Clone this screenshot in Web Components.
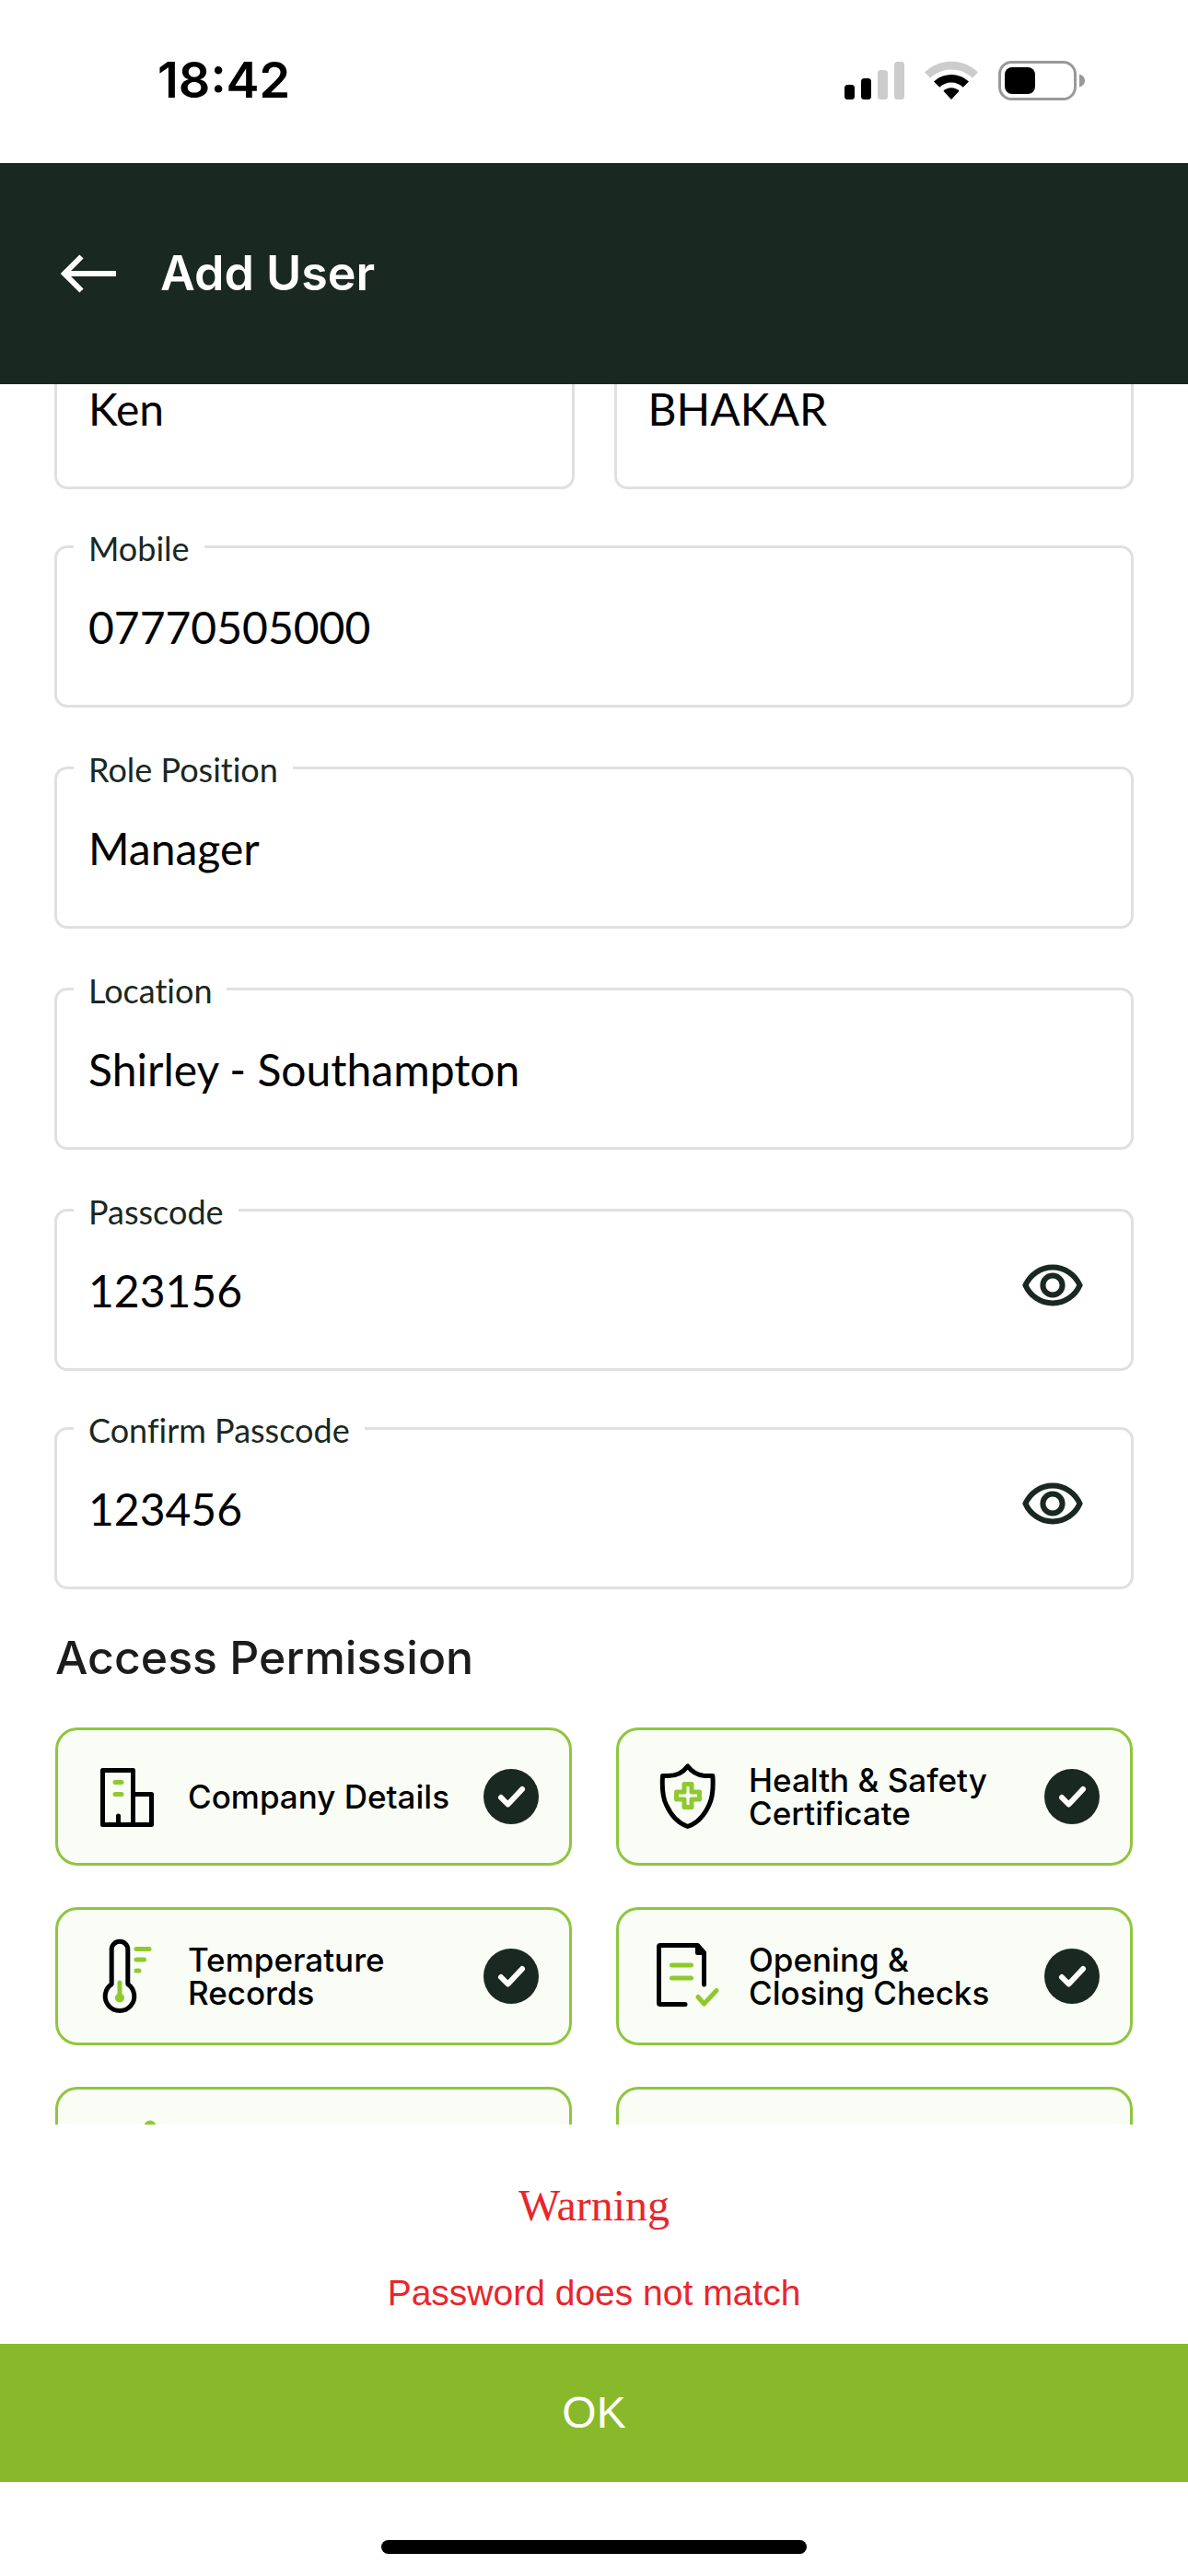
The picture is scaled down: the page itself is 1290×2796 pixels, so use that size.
<!DOCTYPE html>
<html lang="en">
<head>
<meta charset="utf-8">
<meta name="viewport" content="width=device-width, initial-scale=1">
<title>Add User</title>
<style>
  html, body { margin: 0; height: 100%; }
  body { background: #fff; color: #000; font-family: Lato, sans-serif; }
</style>
</head>
<body>
<app-screen>
  <status-bar slot="top"></status-bar>
  <app-header slot="top">Add User</app-header>

  <form-stack>
    <form-row>
      <text-field label="First Name" value="Ken"></text-field>
      <text-field label="Last Name" value="BHAKAR"></text-field>
    </form-row>
    <form-stack class="details">
      <text-field label="Mobile" value="07770505000"></text-field>
      <text-field label="Role Position" value="Manager"></text-field>
      <text-field label="Location" value="Shirley - Southampton"></text-field>
      <text-field label="Passcode" value="123156" reveal></text-field>
    </form-stack>
    <text-field label="Confirm Passcode" value="123456" reveal></text-field>
  </form-stack>

  <permission-list heading="Access Permission">
    <permission-card icon="building">Company Details</permission-card>
    <permission-card icon="shield">Health &amp; Safety Certificate</permission-card>
    <permission-card icon="thermometer">Temperature Records</permission-card>
    <permission-card icon="checklist">Opening &amp; Closing Checks</permission-card>
    <permission-card icon="dot"></permission-card>
    <permission-card></permission-card>
  </permission-list>

  <warning-sheet slot="bottom">
    <span slot="title">Warning</span>
    Password does not match
    <span slot="action">OK</span>
  </warning-sheet>
  <home-indicator slot="bottom"></home-indicator>
</app-screen>

<script>
  class Base extends HTMLElement {
    constructor() {
      super();
      this.attachShadow({ mode: 'open' });
    }
    connectedCallback() {
      this.shadowRoot.innerHTML = this.render();
    }
  }

  customElements.define('app-screen', class extends Base {
    render() {
      return `
        <style>
          :host { display: flex; flex-direction: column; height: 100vh; overflow: hidden; }
          main { flex: 1; min-height: 0; overflow: hidden; padding: 0 59px; }
          .scrolled { margin-top: -84px; }
        </style>
        <slot name="top"></slot>
        <main><div class="scrolled"><slot></slot></div></main>
        <slot name="bottom"></slot>`;
    }
  });

  customElements.define('status-bar', class extends Base {
    render() {
      return `
        <style>
          :host {
            display: flex; justify-content: space-between; align-items: center;
            box-sizing: border-box; height: 177px; padding: 0 111px 3px 171px;
            font: 600 54px/64px Inter, sans-serif;
          }
          .icons { display: flex; align-items: center; gap: 22px; }
          svg { display: block; }
        </style>
        <span>18:42</span>
        <div class="icons">
          <svg width="65" height="43" viewBox="0 0 65 43">
            <rect x="0" y="26" width="11" height="16" rx="3.5"/>
            <rect x="18" y="19" width="11" height="23" rx="3.5"/>
            <rect x="36" y="10" width="11" height="32" rx="3.5" fill="#ccc"/>
            <rect x="54" y="1" width="11" height="41" rx="3.5" fill="#ccc"/>
          </svg>
          <svg width="58" height="43" viewBox="0 0 58 43">
            <path d="M29 .8C18 .8 7.600 5 0 12.400L6.200 18.600C12.200 12.800 20.200 9.500 29 9.500S45.800 12.800 51.800 18.600L58 12.400C50.400 5 40 .8 29 .8Z" fill="#ccc"/>
            <path d="M29 15C21.800 15 15 17.800 10 22.600L16.200 28.700C19.600 25.500 24.200 23.500 29 23.500S38.400 25.500 41.800 28.700L48 22.600C43 17.800 36.200 15 29 15Z"/>
            <path d="M29 29.200C25.700 29.200 22.700 30.400 20.400 32.700L29 42L37.600 32.700C35.300 30.400 32.300 29.200 29 29.200Z"/>
          </svg>
          <svg width="95" height="43" viewBox="0 0 95 43">
            <rect x="1.500" y="1.500" width="82" height="40" rx="13" fill="none" stroke="#999" stroke-width="3"/>
            <rect x="7" y="7" width="33" height="29" rx="8"/>
            <path d="M88 14.500C91.500 15.500 94 18 94 21.500S91.500 27.500 88 28.500Z" fill="#999"/>
          </svg>
        </div>`;
    }
  });

  customElements.define('app-header', class extends Base {
    render() {
      return `
        <style>
          :host {
            display: flex; align-items: center; gap: 47px; box-sizing: border-box;
            height: 240px; padding: 0 65px; background: #1a2822; color: #fff;
          }
          button { padding: 0; border: 0; background: none; color: inherit; }
          svg { display: block; }
          h1 { margin: 0; font: 600 52px/60px Inter, sans-serif; }
        </style>
        <button type="button" aria-label="Back">
          <svg width="62" height="42" viewBox="0 0 62 42" fill="none" stroke="currentColor" stroke-width="6">
            <path d="M61 21H5M23.500 2.500L5 21L23.500 39.500"/>
          </svg>
        </button>
        <h1><slot></slot></h1>`;
    }
  });

  customElements.define('form-stack', class extends Base {
    render() {
      return `
        <style>
          :host { display: flex; flex-direction: column; gap: 39px; }
          :host(.details) { gap: 42px; }
        </style>
        <slot></slot>`;
    }
  });

  customElements.define('form-row', class extends Base {
    render() {
      return `
        <style>
          :host { display: flex; gap: 43px; }
          ::slotted(*) { flex: 1; min-width: 0; }
        </style>
        <slot></slot>`;
    }
  });

  customElements.define('text-field', class extends Base {
    render() {
      const eye = `
        <button type="button" aria-label="Show passcode">
          <svg width="72" height="72" viewBox="0 0 72 72" fill="none" stroke="currentColor" stroke-width="6">
            <path d="M36 16.500C49 16.500 60.500 24.500 65.500 36C60.500 47.500 49 55.500 36 55.500S11.500 47.500 6.500 36C11.500 24.500 23 16.500 36 16.500Z"/>
            <circle cx="36" cy="36" r="10.600"/>
          </svg>
        </button>`;
      return `
        <style>
          :host { display: block; }
          fieldset {
            min-width: 0; margin: 0; padding: 0 18px 21px;
            border: 3px solid #e0e0e0; border-radius: 14px;
          }
          legend {
            padding: 4px 16px 0; color: #1a2822; font-size: 36px; line-height: 43px;
            font-variant-ligatures: none;
          }
          label { display: block; }
          .line { display: flex; align-items: center; padding: 0 16px; }
          input {
            flex: 1; min-width: 0; height: 127px; padding: 0; border: 0; outline: 0;
            background: none; color: #000; font: 48px/58px Lato, sans-serif;
          }
          button { padding: 0 15px 12px 0; border: 0; background: none; color: #1a2822; }
          svg { display: block; }
        </style>
        <fieldset>
          <legend><label for="field">${this.getAttribute('label')}</label></legend>
          <div class="line">
            <input id="field" type="text" value="${this.getAttribute('value')}">
            ${this.hasAttribute('reveal') ? eye : ''}
          </div>
        </fieldset>`;
    }
  });

  customElements.define('permission-list', class extends Base {
    render() {
      return `
        <style>
          :host { display: block; padding: 0 1px; }
          h2 { margin: 44px 0 46px; color: #1c1c1c; font: 500 50px/60px Inter, sans-serif; }
          .grid { display: grid; grid-template-columns: 1fr 1fr; gap: 45px 48px; }
        </style>
        <h2>${this.getAttribute('heading')}</h2>
        <div class="grid"><slot></slot></div>`;
    }
  });

  const ICONS = {
    building: `
      <path d="M13.500 16.500H46.500V75.500H13.500ZM46.500 42.500H66.500V75.500H46.500M30.500 66V75"/>
      <path class="green" d="M27 29.500H34M27 42.500H34"/>`,
    shield: `
      <path d="M39.700 12C35 18.500 27.500 22.500 18.500 22.600H12.500C11.800 34 12 45 16.500 54C21.500 65 29.500 74 39.700 77.500C50 74 58 65 63 54C67.500 45 67.600 34 66.900 22.600H61C52 22.500 44.500 18.500 39.700 12Z"/>
      <path class="green" d="M36 31.500H44V40H52.500V48H44V56.500H36V48H27.500V40H36Z"/>`,
    thermometer: `
      <path d="M23.200 53.600V16A8.800 8.800 0 0 1 40.800 16V53.600A15.800 15.800 0 1 1 23.200 53.600Z"/>
      <path class="green" d="M32 52V66M50 15.500H64M50 27H58.500M50 39H53"/>
      <circle cx="32" cy="68.500" r="5" fill="#8fc92f" stroke="none"/>`,
    checklist: `
      <path d="M57.500 54V19.500L50.500 11.500H10Q8.500 11.500 8.500 13V74Q8.500 75.500 10 75.500H37M50.500 12V19.500H57" />
      <path d="M50 12V20H58Z" fill="#000" stroke="none"/>
      <path class="green" d="M22.500 33H43.500M22.500 47H43.500M51 67.500L57.500 75L71 60.500"/>`,
    dot: `<circle cx="65" cy="13" r="6.500" fill="#8fc92f" stroke="none"/>`
  };

  customElements.define('permission-card', class extends Base {
    render() {
      return `
        <style>
          :host { display: block; }
          label {
            display: flex; align-items: center; gap: 26px; box-sizing: border-box;
            height: 150px; padding: 0 33px 0 35px;
            border: 3px solid #8fc63f; border-radius: 24px; background: #f9fdf5;
            font: 500 35px/36px Inter, sans-serif;
          }
          .text { flex: 1; min-width: 0; }
          .icon {
            flex: none; fill: none; stroke: #000; stroke-width: 5;
            stroke-linecap: round; stroke-linejoin: round;
          }
          .green { stroke: #8fc92f; }
          .tick { display: grid; flex: none; }
          .tick > * { grid-area: 1 / 1; width: 60px; height: 60px; margin: 0; }
          input { appearance: none; border-radius: 50%; background: #1a2822; }
          .tick svg {
            pointer-events: none; fill: none; stroke: #fff; stroke-width: 6;
            stroke-linecap: round; stroke-linejoin: round;
          }
        </style>
        <label>
          <svg class="icon" width="80" height="90" viewBox="0 0 80 90">${ICONS[this.getAttribute('icon')] || ''}</svg>
          <span class="text"><slot></slot></span>
          <span class="tick">
            <input type="checkbox" checked>
            <svg viewBox="0 0 60 60"><path d="M19 31L26.500 38.500L42 22"/></svg>
          </span>
        </label>`;
    }
  });

  customElements.define('warning-sheet', class extends Base {
    render() {
      return `
        <style>
          :host { display: block; background: #fff; text-align: center; }
          .message { padding: 60px 0 32px; color: #e8262d; }
          h2 { margin: 0 0 44px; font: 400 48px/56px "Liberation Serif", serif; }
          p { margin: 0; font: 39px/46px "Liberation Sans", sans-serif; }
          button {
            display: block; width: 100%; height: 150px; padding: 0; border: 0;
            background: #87b92b; color: #fff; font: 48px/56px "Liberation Sans", sans-serif;
          }
        </style>
        <div class="message">
          <h2><slot name="title"></slot></h2>
          <p><slot></slot></p>
        </div>
        <button type="button"><slot name="action"></slot></button>`;
    }
  });

  customElements.define('home-indicator', class extends Base {
    render() {
      return `
        <style>
          :host { display: flex; justify-content: center; padding: 63px 0 24px; background: #fff; }
          span { width: 462px; height: 15px; border-radius: 8px; background: #000; }
        </style>
        <span></span>`;
    }
  });
</script>
</body>
</html>
